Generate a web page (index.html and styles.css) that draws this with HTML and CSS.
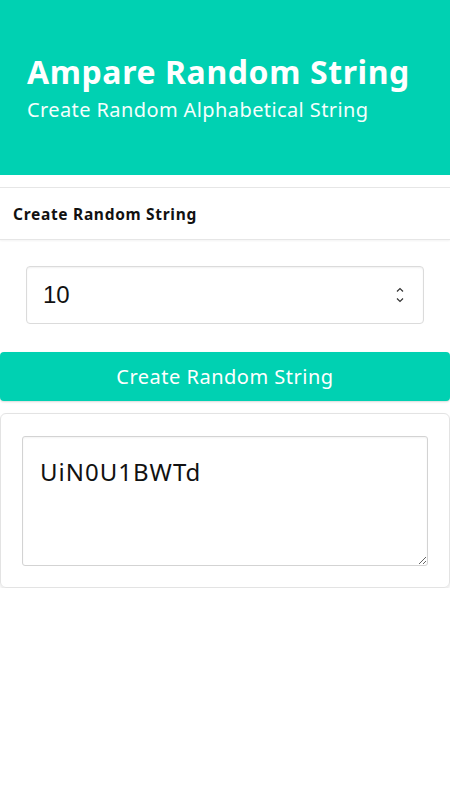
FILE: index.html
```html
<!DOCTYPE html>
<html>
<head>
<meta charset="utf-8">
<link rel="stylesheet" href="styles.css">
</head>
<body>
<header class="hero">
  <h1 class="title">Ampare Random String</h1>
  <p class="subtitle">Create Random Alphabetical String</p>
</header>
<section class="panel">
  <div class="panel-header">Create Random String</div>
  <div class="field">
    <div class="number-input">
      <span class="number-value">10</span>
      <svg class="spin" width="10" height="18" viewBox="0 0 10 18">
        <path d="M2 5.5 L5 2.5 L8 5.5" fill="none" stroke="#333" stroke-width="1.2"/>
        <path d="M2 12.5 L5 15.5 L8 12.5" fill="none" stroke="#333" stroke-width="1.2"/>
      </svg>
    </div>
  </div>
  <button class="btn">Create Random String</button>
  <div class="card">
    <textarea class="output">UiN0U1BWTd</textarea>
  </div>
</section>
</body>
</html>
```
FILE: styles.css
```css
* { box-sizing: border-box; }
html, body { margin: 0; padding: 0; background: #fff; }
body { font-family: "Noto Sans", "Open Sans", sans-serif; color: #363636; width: 450px; }

.hero {
  background: #00d1b2;
  height: 175px;
  padding: 50px 27px 0;
  color: #fff;
}
.title {
  margin: 0;
  font-size: 32px;
  font-weight: 700;
  line-height: 44px;
  letter-spacing: 0.6px;
}
.subtitle {
  margin: 0;
  padding-top: 2px;
  font-size: 20px;
  font-weight: 400;
  line-height: 28px;
  letter-spacing: 0.4px;
  color: #f4fffd;
}

.panel { margin-top: 12px; }
.panel-header {
  height: 53px;
  border-top: 1px solid #e6e6e6;
  border-bottom: 1px solid #e6e6e6;
  box-shadow: 0 1px 2px rgba(10,10,10,0.05);
  padding-left: 13px;
  display: flex;
  align-items: center;
  font-size: 15.5px;
  font-weight: 700;
  letter-spacing: 0.7px;
  color: #111;
}
.field { padding: 26px 26px 0; }
.number-input {
  height: 58px;
  border: 1px solid #dbdbdb;
  border-radius: 4px;
  box-shadow: inset 0 1px 2px rgba(10,10,10,0.06);
  display: flex;
  align-items: center;
  justify-content: space-between;
  padding: 0 18px 0 16px;
}
.number-value {
  font-family: "Liberation Sans", Arial, sans-serif;
  font-size: 24px;
  color: #111;
}
.spin { display: block; }

.btn {
  display: block;
  width: 100%;
  margin-top: 28px;
  height: 49px;
  border: none;
  border-radius: 4px;
  background: #00d1b2;
  color: #fff;
  font-family: "Noto Sans", "Open Sans", sans-serif;
  font-size: 20px;
  letter-spacing: 0.5px;
  box-shadow: 0 1px 2px rgba(10,10,10,0.15);
  padding: 0;
}

.card {
  margin-top: 12px;
  height: 175px;
  border: 1px solid #e3e3e3;
  border-radius: 6px;
  box-shadow: 0 2px 3px rgba(10,10,10,0.1);
  padding: 22px 21px;
}
.output {
  display: block;
  width: 100%;
  height: 130px;
  border: 1px solid #d3d3d3;
  border-radius: 3px;
  padding: 18px 17px;
  font-family: "Noto Sans", "Open Sans", sans-serif;
  font-size: 24px;
  letter-spacing: 1px;
  color: #111;
  resize: vertical;
  box-shadow: inset 0 1px 2px rgba(10,10,10,0.05);
}
```
